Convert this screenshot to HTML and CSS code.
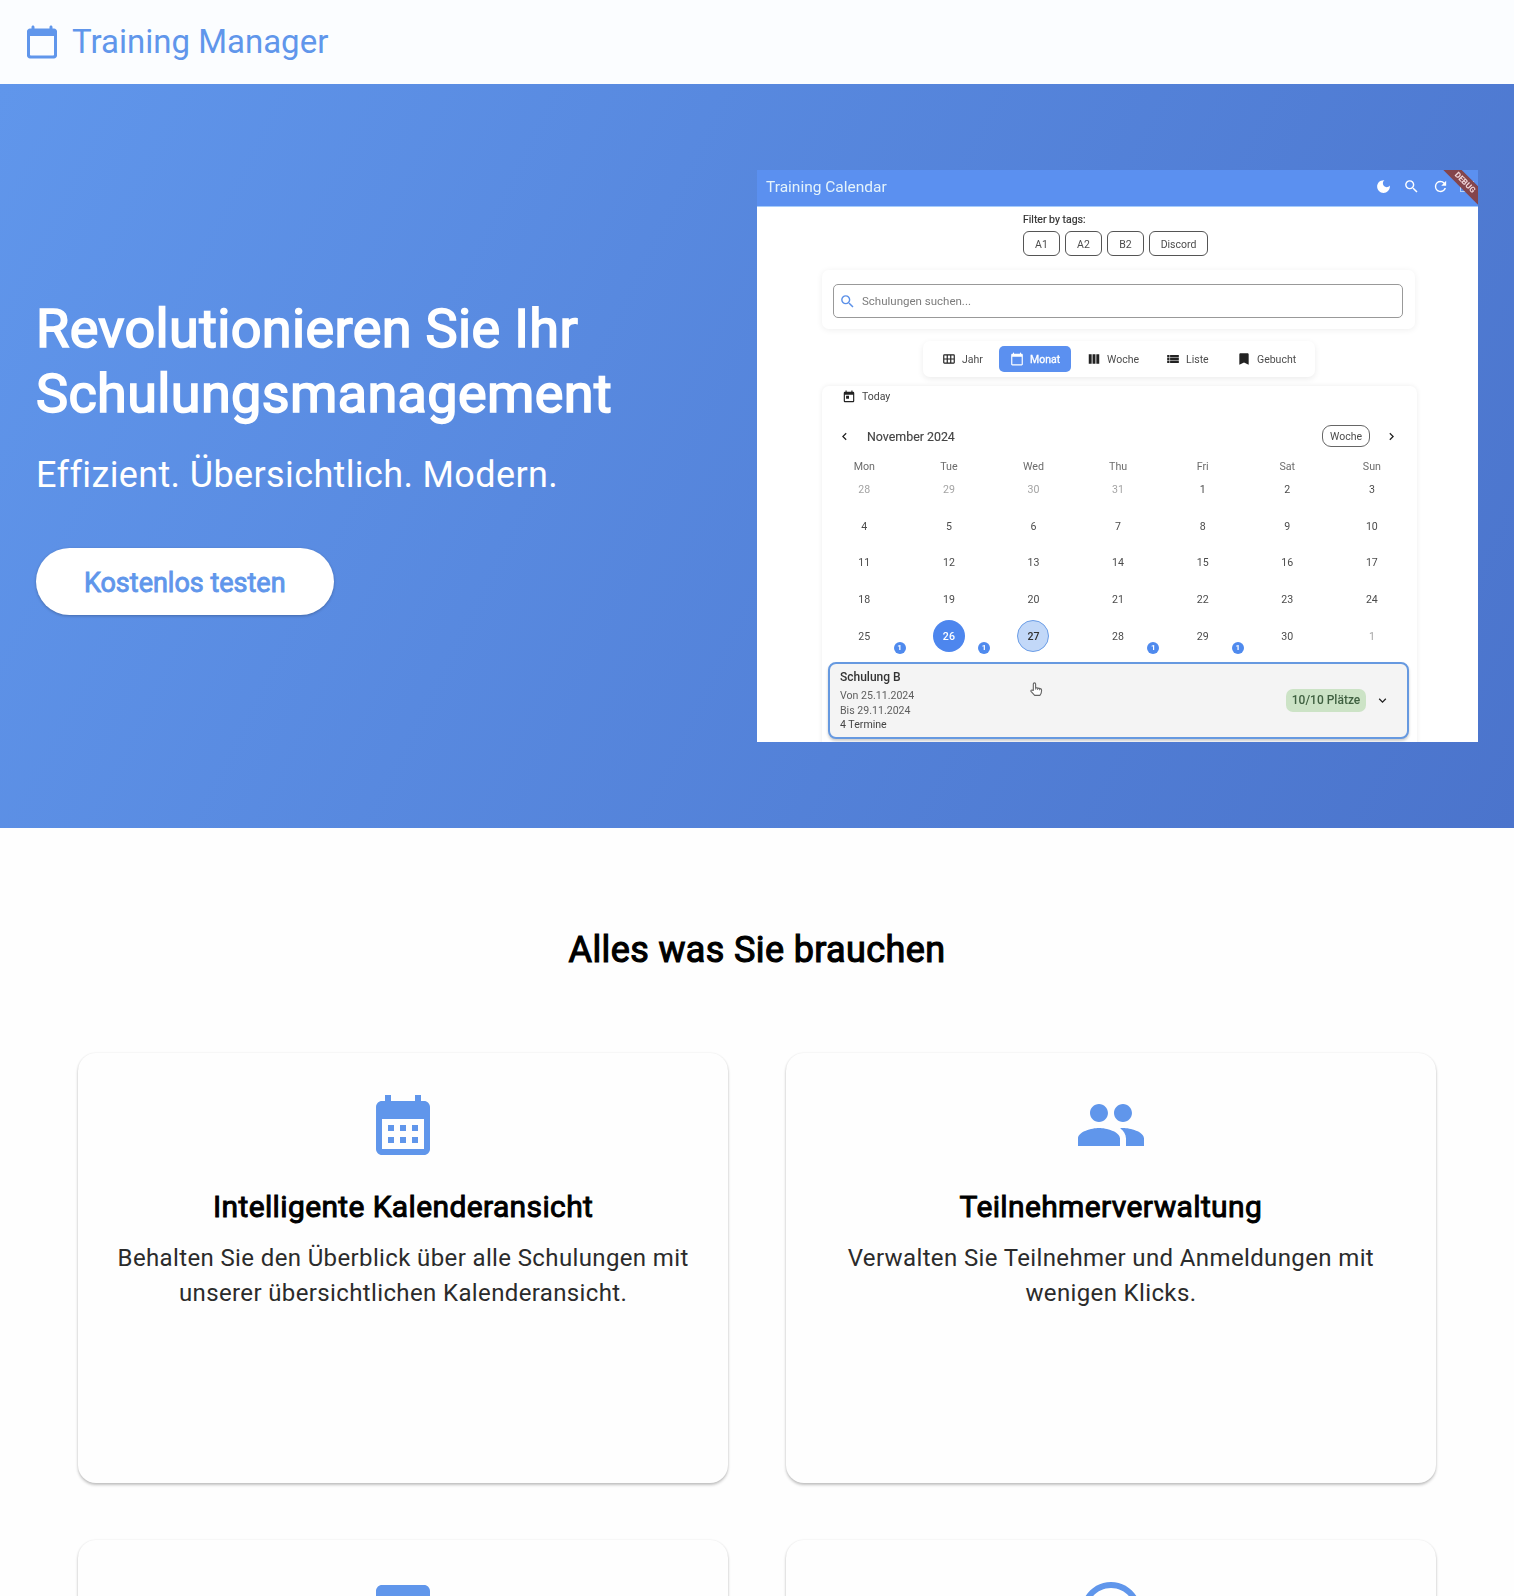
FILE: index.html
```html
<!DOCTYPE html>
<html lang="de">
<head>
<meta charset="utf-8">
<title>Training Manager</title>
<link rel="stylesheet" href="styles.css">
</head>
<body>
<svg class="sprite" aria-hidden="true">
  <symbol id="cal" viewBox="0 0 24 24"><path d="M20 3h-1V2c0-.55-.45-1-1-1s-1 .45-1 1v1H7V2c0-.55-.45-1-1-1s-1 .45-1 1v1H4c-1.100 0-2 .9-2 2v16c0 1.100.9 2 2 2h16c1.100 0 2-.9 2-2V5c0-1.100-.9-2-2-2zm-.5 18h-15c-.28 0-.5-.22-.5-.5V8h16v12.500c0 .28-.22.5-.5.5z"/></symbol>
  <symbol id="month" viewBox="0 0 24 24"><path d="M19 4h-1V2h-2v2H8V2H6v2H5c-1.110 0-1.990.9-1.990 2L3 20c0 1.100.89 2 2 2h14c1.100 0 2-.9 2-2V6c0-1.100-.9-2-2-2zm0 16H5V10h14v10zM9 14H7v-2h2v2zm4 0h-2v-2h2v2zm4 0h-2v-2h2v2zm-8 4H7v-2h2v2zm4 0h-2v-2h2v2zm4 0h-2v-2h2v2z"/></symbol>
  <symbol id="people" viewBox="0 0 24 24"><path d="M16 11c1.660 0 2.990-1.340 2.990-3S17.660 5 16 5s-3 1.340-3 3 1.340 3 3 3zm-8 0c1.660 0 2.990-1.340 2.990-3S9.660 5 8 5 5 6.340 5 8s1.340 3 3 3zm0 2c-2.330 0-7 1.170-7 3.500V19h14v-2.500c0-2.330-4.670-3.500-7-3.500zm8 0c-.29 0-.62.02-.97.05 1.160.84 1.970 1.970 1.970 3.450V19h6v-2.500c0-2.330-4.670-3.500-7-3.500z"/></symbol>
  <symbol id="chart" viewBox="0 0 24 24"><path d="M19 3H5c-1.100 0-2 .9-2 2v14c0 1.100.9 2 2 2h14c1.100 0 2-.9 2-2V5c0-1.100-.9-2-2-2zM9 17H7v-7h2v7zm4 0h-2V7h2v10zm4 0h-2v-4h2v4z"/></symbol>
  <symbol id="clock" viewBox="0 0 24 24"><path d="M12 2C6.500 2 2 6.500 2 12s4.500 10 10 10 10-4.500 10-10S17.500 2 12 2zm0 18c-4.400 0-8-3.600-8-8s3.600-8 8-8 8 3.600 8 8-3.600 8-8 8zm.5-13H11v6l5.250 3.150.75-1.230-4.500-2.670V7z"/></symbol>
  <symbol id="moon" viewBox="0 0 24 24"><path d="M12 3c-5 0-9 4-9 9s4 9 9 9 9-4 9-9c0-.46-.04-.92-.1-1.360-.98 1.370-2.580 2.260-4.400 2.260-3 0-5.400-2.400-5.400-5.400 0-1.810.89-3.420 2.260-4.400C12.920 3.040 12.460 3 12 3z"/></symbol>
  <symbol id="search" viewBox="0 0 24 24"><path d="M15.500 14h-.79l-.28-.27A6.470 6.470 0 0 0 16 9.500 6.500 6.500 0 1 0 9.500 16c1.610 0 3.090-.59 4.230-1.570l.27.28v.79l5 4.990L20.490 19l-4.990-5zm-6 0C7.010 14 5 11.990 5 9.500S7.010 5 9.500 5 14 7.010 14 9.500 11.990 14 9.500 14z"/></symbol>
  <symbol id="refresh" viewBox="0 0 24 24"><path d="M17.650 6.350A7.960 7.960 0 0 0 12 4a8 8 0 1 0 7.730 10h-2.080A6 6 0 1 1 12 6c1.660 0 3.140.69 4.220 1.780L13 11h7V4l-2.350 2.350z"/></symbol>
  <symbol id="grid" viewBox="0 0 24 24"><path d="M20 4H4a2 2 0 0 0-2 2v12a2 2 0 0 0 2 2h16a2 2 0 0 0 2-2V6a2 2 0 0 0-2-2zM8 11H4V6h4v5zm6 0h-4V6h4v5zm6 0h-4V6h4v5zM8 18H4v-5h4v5zm6 0h-4v-5h4v5zm6 0h-4v-5h4v5z"/></symbol>
  <symbol id="columns" viewBox="0 0 24 24"><path d="M3 4h5v16H3zM9.500 4h5v16h-5zM16 4h5v16h-5z"/></symbol>
  <symbol id="list" viewBox="0 0 24 24"><path d="M2 5h4v4H2zM7 5h15v4H7zM2 10h4v4H2zM7 10h15v4H7zM2 15h4v4H2zM7 15h15v4H7z"/></symbol>
  <symbol id="bookmark" viewBox="0 0 24 24"><path d="M18 2H6c-1.100 0-2 .9-2 2v18l8-4 8 4V4c0-1.100-.9-2-2-2z"/></symbol>
  <symbol id="today" viewBox="0 0 24 24"><path d="M19 3h-1V1h-2v2H8V1H6v2H5a2 2 0 0 0-2 2v14a2 2 0 0 0 2 2h14a2 2 0 0 0 2-2V5a2 2 0 0 0-2-2zm0 16H5V8h14v11zM7 10h5v5H7z"/></symbol>
  <symbol id="left" viewBox="0 0 24 24"><path d="M15.410 7.410 14 6l-6 6 6 6 1.410-1.410L10.830 12z"/></symbol>
  <symbol id="right" viewBox="0 0 24 24"><path d="M8.590 16.590 10 18l6-6-6-6-1.410 1.410L13.170 12z"/></symbol>
  <symbol id="down" viewBox="0 0 24 24"><path d="M16.590 8.590 12 13.170 7.410 8.590 6 10l6 6 6-6z"/></symbol>
  <symbol id="hand" viewBox="0 0 24 24"><path d="M8 14V4.500a1.700 1.700 0 0 1 3.400 0V10l7 1.500c1.500.3 2.100 1.300 2 2.700l-.7 4.300-1.700 3H10l-5.500-6c-.8-1 .6-2.500 1.800-1.800z" fill="#fff" stroke="#666" stroke-width="1.700" stroke-linejoin="round"/><path d="M11.400 10v3M14.400 11v2.500M17.400 11.500v2.500" fill="none" stroke="#666" stroke-width="1.300"/></symbol>
</svg>

<header class="topbar">
  <svg class="topbar-icon"><use href="#cal"/></svg>
  <span class="topbar-title">Training Manager</span>
</header>

<section class="hero">
  <div class="hero-copy">
    <h1 class="hero-title">Revolutionieren Sie Ihr<br>Schulungsmanagement</h1>
    <p class="hero-sub">Effizient. Übersichtlich. Modern.</p>
    <a class="hero-cta">Kostenlos testen</a>
  </div>

  <div class="app">
    <div class="app-bar">
      <span class="app-title">Training Calendar</span>
      <svg class="bar-icon"><use href="#moon"/></svg>
      <svg class="bar-icon"><use href="#search"/></svg>
      <svg class="bar-icon"><use href="#refresh"/></svg>
      <span class="bar-box"></span>
      <span class="debug">DEBUG</span>
    </div>
    <div class="filter">
      <div class="filter-label">Filter by tags:</div>
      <div class="chips"><span class="chip">A1</span><span class="chip">A2</span><span class="chip">B2</span><span class="chip chip-wide">Discord</span></div>
    </div>
    <div class="search-card">
      <div class="search-field"><svg class="search-icon"><use href="#search"/></svg><span>Schulungen suchen...</span></div>
    </div>
    <div class="views">
      <span class="view view-year"><svg class="view-icon"><use href="#grid"/></svg>Jahr</span>
      <span class="view view-active"><svg class="view-icon"><use href="#cal"/></svg>Monat</span>
      <span class="view view-week"><svg class="view-icon"><use href="#columns"/></svg>Woche</span>
      <span class="view view-list"><svg class="view-icon"><use href="#list"/></svg>Liste</span>
      <span class="view view-booked"><svg class="view-icon"><use href="#bookmark"/></svg>Gebucht</span>
    </div>
    <div class="calendar">
      <div class="today"><svg class="today-icon"><use href="#today"/></svg>Today</div>
      <div class="month-row">
        <svg class="chev"><use href="#left"/></svg>
        <span class="month-name">November 2024</span>
        <span class="week-pill">Woche</span>
        <svg class="chev"><use href="#right"/></svg>
      </div>
      <div class="weekdays"><span>Mon</span><span>Tue</span><span>Wed</span><span>Thu</span><span>Fri</span><span>Sat</span><span>Sun</span></div>
      <div class="days">
        <span class="out">28</span><span class="out">29</span><span class="out">30</span><span class="out">31</span><span>1</span><span>2</span><span>3</span>
        <span>4</span><span>5</span><span>6</span><span>7</span><span>8</span><span>9</span><span>10</span>
        <span>11</span><span>12</span><span>13</span><span>14</span><span>15</span><span>16</span><span>17</span>
        <span>18</span><span>19</span><span>20</span><span>21</span><span>22</span><span>23</span><span>24</span>
        <span>25<i class="dot">1</i></span><span><b class="sel">26</b><i class="dot">1</i></span><span><b class="now">27</b></span><span>28<i class="dot">1</i></span><span>29<i class="dot">1</i></span><span>30</span><span class="out">1</span>
      </div>
      <div class="event">
        <div class="event-text">
          <div class="event-title">Schulung B</div>
          <div class="event-line">Von 25.11.2024</div>
          <div class="event-line">Bis 29.11.2024</div>
          <div class="event-line event-dark">4 Termine</div>
        </div>
        <span class="seats">10/10 Plätze</span>
        <svg class="chev"><use href="#down"/></svg>
        <svg class="hand"><use href="#hand"/></svg>
      </div>
    </div>
  </div>
</section>

<section class="features">
  <h2 class="features-title">Alles was Sie brauchen</h2>
  <div class="cards">
    <article class="card">
      <svg class="card-icon"><use href="#month"/></svg>
      <h3 class="card-title">Intelligente Kalenderansicht</h3>
      <p class="card-text">Behalten Sie den Überblick über alle Schulungen mit<br>unserer übersichtlichen Kalenderansicht.</p>
    </article>
    <article class="card">
      <svg class="card-icon"><use href="#people"/></svg>
      <h3 class="card-title">Teilnehmerverwaltung</h3>
      <p class="card-text">Verwalten Sie Teilnehmer und Anmeldungen mit<br>wenigen Klicks.</p>
    </article>
    <article class="card"><svg class="card-icon"><use href="#chart"/></svg></article>
    <article class="card"><svg class="card-icon"><use href="#clock"/></svg></article>
  </div>
</section>
</body>
</html>
```

FILE: styles.css
```css
* { box-sizing: border-box; }
html, body { margin: 0; height: 1596px; overflow: hidden; }
body { background: #fefefe; font-family: Roboto, "Liberation Sans", sans-serif; color: #000; }
h1, h2, h3, p { margin: 0; font-weight: 400; }
svg { fill: currentColor; flex: none; display: block; }
.sprite { position: absolute; width: 0; height: 0; }

.topbar { height: 84px; padding: 0 24px; display: flex; align-items: center; gap: 12px; background: #fbfdff; color: #6096eb; }
.topbar-icon { width: 36px; height: 36px; }
.topbar-title { font-size: 33px; line-height: 42px; }

.hero { height: 744px; padding: 0 36px; display: flex; align-items: center; background: linear-gradient(116.170deg, #6096eb, #4b74cc); }
.hero-copy { width: 721px; color: #fff; padding-bottom: 1px; }
.hero-title { font-size: 54px; line-height: 65px; letter-spacing: .36px; -webkit-text-stroke: .031em currentColor; }
.hero-sub { font-size: 36px; line-height: 48px; margin-top: 25px; letter-spacing: .37px; }
.hero-cta { display: flex; width: 297.500px; height: 67px; margin-top: 49.500px; padding-top: 2px; align-items: center; justify-content: center; border-radius: 34px; background: #fff; color: #6096eb; font-size: 27px; -webkit-text-stroke: .033em currentColor; box-shadow: 0 1px 3px rgba(0,0,0,.25); }

/* product preview */
.app { width: 721px; height: 572px; background: #fff; overflow: hidden; filter: blur(.45px); color: #4c4c4c; font-size: 11px; clip-path: inset(0); }
.app-bar { position: relative; height: 37px; padding: 0 3px 3px 9px; display: flex; align-items: center; background: #5b90f0; border-bottom: 1px solid #a6ccfb; color: #fff; }
.app-title { flex: 1; font-size: 15.500px; color: #e4f3fb; }
.bar-icon { width: 17px; height: 17px; margin-right: 11.300px; }
.bar-box { width: 14px; height: 11px; margin-right: 1px; border: 1.500px solid #b7d6f8; }
.debug { position: absolute; right: -25px; top: 6px; width: 76px; height: 13px; background: #84454c; color: #f3d9dc; font-size: 8px; font-weight: 700; line-height: 13px; text-align: center; transform: rotate(45deg); }
.filter { margin-left: 266px; padding-top: 6px; }
.filter-label { font-size: 10.500px; line-height: 14px; color: #333; -webkit-text-stroke: .2px currentColor; }
.chips { display: flex; gap: 5px; margin-top: 4px; }
.chip { width: 37px; height: 25px; border: 1.500px solid #555; border-radius: 6px; display: flex; align-items: center; justify-content: center; padding-top: 1px; font-size: 10.500px; }
.chip-wide { width: 59px; }
.search-card { width: 593px; height: 59px; margin: 14px 0 0 65px; padding: 14px 12px 0 11px; border-radius: 7px; box-shadow: 0 1px 6px rgba(0,0,0,.07); }
.search-field { height: 34px; display: flex; align-items: center; border: 1px solid #999; border-radius: 5px; padding-left: 5px; gap: 6px; font-size: 11.500px; color: #7c7c7c; }
.search-icon { width: 17px; height: 17px; color: #5b90e8; }
.views { width: 392px; height: 36px; margin: 12px 0 0 166px; border-radius: 7px; display: flex; align-items: center; box-shadow: 0 2px 6px rgba(0,0,0,.08); }
.view { display: flex; align-items: center; gap: 6px; height: 26px; font-size: 10.500px; }
.view-icon { width: 14px; height: 14px; color: #222; }
.view-year { padding-left: 19px; width: 76px; }
.view-active { width: 72px; padding-left: 11px; background: #5b90f0; border-radius: 5px; color: #fff; -webkit-text-stroke: .3px currentColor; }
.view-active .view-icon { color: #fff; }
.view-week { padding-left: 16px; width: 78px; }
.view-list { padding-left: 17px; width: 71px; }
.view-booked { padding-left: 17px; }
.calendar { width: 595px; height: 372px; margin: 9px 0 0 65px; border-radius: 7px; box-shadow: 0 0 5px rgba(0,0,0,.08); }
.today { display: flex; align-items: center; gap: 6px; height: 21px; padding-left: 20px; font-size: 10.500px; color: #444; }
.today-icon { width: 14px; height: 14px; color: #222; }
.month-row { display: flex; align-items: center; height: 28.500px; margin-top: 17px; padding: 0 18px 4px 15px; }
.chev { width: 15px; height: 15px; color: #222; }
.month-name { flex: 1; margin-left: 15px; font-size: 12.400px; color: #444; -webkit-text-stroke: .15px currentColor; }
.week-pill { width: 48px; height: 22px; border: 1.300px solid #666; border-radius: 9px; display: flex; align-items: center; justify-content: center; margin-right: 14px; font-size: 10.500px; flex: none; }
.weekdays, .days { display: grid; grid-template-columns: repeat(7, 84.600px); }
.weekdays { height: 21px; line-height: 27px; text-align: center; font-size: 10.700px; color: #6c6c6c; }
.days { grid-auto-rows: 36.700px; font-size: 10.600px; margin-top: -2.500px; }
.days span { position: relative; display: flex; align-items: center; justify-content: center; }
.days .out { color: #a4a4a4; }
.sel, .now { width: 32px; height: 32px; border-radius: 50%; display: flex; align-items: center; justify-content: center; }
.sel { background: #4d86ee; color: #fff; font-weight: 500; }
.now { background: #c2d8f8; border: 1.500px solid #6b9de6; color: #333; font-weight: 500; }
.dot { position: absolute; left: 71.500px; top: 24px; width: 12px; height: 12px; border-radius: 50%; background: #4f8aee; color: #fff; font-style: normal; font-weight: 700; font-size: 8px; line-height: 12px; text-align: center; }
.event { position: relative; width: 581px; height: 77px; margin: 7.500px 0 0 6px; padding: 0 17px 0 10px; display: flex; align-items: center; border: 2px solid #6699e0; border-radius: 8px; background: #f4f4f4; box-shadow: 0 2px 3px rgba(0,0,0,.2); }
.event-text { flex: 1; }
.event-title { font-size: 12px; line-height: 18px; font-weight: 500; color: #333; margin-bottom: 3px; }
.event-line { font-size: 10.600px; line-height: 14.700px; color: #5e5e5e; }
.event-dark { color: #444; }
.seats { width: 80px; height: 23px; border-radius: 7px; background: #cce3c6; color: #3f6040; font-size: 12px; font-weight: 500; display: flex; align-items: center; justify-content: center; margin-right: 9px; }
.hand { position: absolute; left: 198px; top: 17px; width: 16px; height: 16px; }

.features { padding: 101px 78px 0; }
.features-title { font-size: 36px; line-height: 42px; text-align: center; letter-spacing: .37px; -webkit-text-stroke: .031em currentColor; }
.cards { display: grid; grid-template-columns: 1fr 1fr; gap: 56.900px 57.500px; margin-top: 81.700px; grid-auto-rows: 430.100px; }
.card { padding: 36px; border-radius: 18px; background: #fefefe; display: flex; flex-direction: column; align-items: center; text-align: center; box-shadow: 0 2px 3px rgba(0,0,0,.24), 0 0 2px rgba(0,0,0,.08); }
.card-icon { width: 72px; height: 72px; color: #6096eb; }
.card-title { margin-top: 25px; font-size: 30px; line-height: 42px; letter-spacing: .37px; -webkit-text-stroke: .032em currentColor; }
.card-text { margin-top: 13px; font-size: 24px; line-height: 35px; color: #2b2b2b; letter-spacing: .37px; white-space: nowrap; }
```
